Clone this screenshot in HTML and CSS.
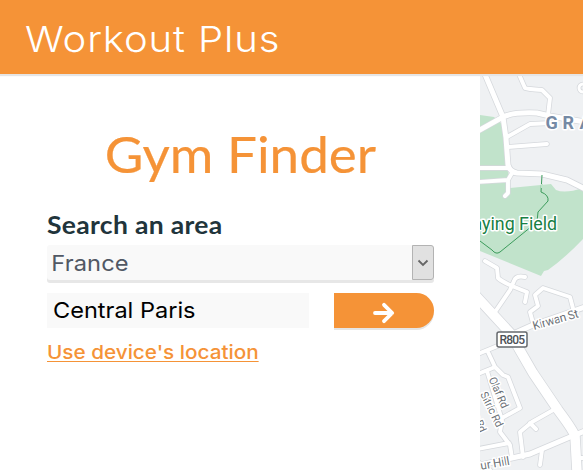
FILE: index.html
```html
<!DOCTYPE html>
<html lang="en">
<head>
<meta charset="utf-8">
<title>Workout Plus</title>
<link rel="stylesheet" href="styles.css">
</head>
<body>
<header class="bar"><span class="brand">Workout Plus</span></header>
<div class="content">
  <main class="panel">
    <h1 class="title">Gym Finder</h1>
    <h2 class="label">Search an area</h2>
    <div class="select">
      <span class="country">France</span>
      <span class="drop"><svg width="12" height="8" viewBox="0 0 12 8"><path d="M1.500 1.500 6 6l4.500-4.500" fill="none" stroke="#666" stroke-width="1.800"/></svg></span>
    </div>
    <form class="row">
      <div class="field"><span class="city">Central Paris</span></div>
      <button class="go" type="button" aria-label="Search"><svg width="22" height="22" viewBox="0 0 22 22"><path d="M2 11H19M11 2.800 19.200 11 11 19.200" fill="none" stroke="#fff" stroke-width="3.800" stroke-linecap="round" stroke-linejoin="round"/></svg></button>
    </form>
    <a class="link"><span>Use device's location</span></a>
  </main>
  <svg class="map" width="103" height="396" viewBox="480 74 103 396">
    <defs>
      <g id="roads" fill="none" stroke-linejoin="round" stroke-linecap="round">
        <path d="M518 72 525 88Q527 89 542 90L550 98 548 115M507 137 530 124 552 123M507 147 547 144M478 168H508M478 182 508 180 512 173M508 180V193L505 196"/>
        <path d="M485 261 497 268 498 278Q503 283 527 292L525 302M525 277Q516 275 514 281L510 290 495 312M574 312 570 297 543 288 535 295 538 306 530 312 533 323"/>
        <path d="M478 354 512 340M488 352 495 367 503 375 508 377 520 408 502 418M478 374 495 367M487 371 502 420 500 432 510 445 512 458M478 449 509 443M555 409 532 422 520 432 523 457M530 423 536 429M542 450 540 465M577 458H585M478 462 490 470"/>
      </g>
      <g id="streets" fill="none" stroke-linejoin="round" stroke-linecap="round">
        <path d="M484 72 503 117 506 138 508 165Q510 172 517 173L542 174 567 180 585 189M478 131 503 117Q513 112 537 113L550 116 585 122M513 334 533 325 585 307M476 466 512 458 530 454 570 437 585 431"/>
      </g>
      <path id="highway" d="M476 296 512 335 518 347 533 373 558 410Q573 430 575 436L577 472" fill="none"/>
    </defs>
    <rect x="480" y="74" width="103" height="396" fill="#eff1f3"/>
    <path d="M480 115 494 117 502 124 507 160 510 188 551 184 556 190Q565 194 583 188V239Q565 258 548 270L544 271 541 276 480 251Z" fill="#c1e3cb"/>
    <use href="#roads" stroke="#d5d8dc" stroke-width="5.400"/>
    <use href="#streets" stroke="#d5d8dc" stroke-width="6.500"/>
    <use href="#highway" stroke="#d5d8dc" stroke-width="11"/>
    <circle cx="583" cy="88" r="4" fill="#eff1f3" stroke="#d5d8dc" stroke-width="4.500"/>
    <use href="#roads" stroke="#fff" stroke-width="3.900"/>
    <use href="#streets" stroke="#fff" stroke-width="5"/>
    <use href="#highway" stroke="#fff" stroke-width="9.500"/>
    <circle cx="583" cy="88" r="4" fill="none" stroke="#fff" stroke-width="3"/>
    <path d="M542 175 541 192Q549 195 548 201L538 212 537 222 500 252Q496 255 492 250L480 241" fill="none" stroke="#3b9b5b" stroke-width="1"/>
    <path d="M542 184V188" stroke="#c1e3cb" stroke-width="2"/>
    <g class="names">
      <text x="545.500 562.500 579.500" y="129" class="area">GRA</text>
      <text x="557" y="230" class="park" text-anchor="end">Playing Field</text>
      <text transform="translate(534 330) rotate(-16)" class="road" textLength="47">Kirwan St</text>
      <text transform="translate(466 402) rotate(66)" class="road small" textLength="34">Ross Rd</text>
      <text transform="translate(488.500 379) rotate(66)" class="road small" textLength="33">Olaf Rd</text>
      <text transform="translate(480 394) rotate(64)" class="road small" textLength="38">Sitric Rd</text>
      <text transform="translate(457 474) rotate(-10)" class="road" textLength="54">Arbour Hill</text>
    </g>
    <rect x="497" y="332" width="30" height="15" rx="2" fill="#fff" stroke="#66696d" stroke-width="1.500"/>
    <text x="499.500" y="344" class="shield" textLength="25.500">R805</text>
  </svg>
</div>
</body>
</html>
```

FILE: styles.css
```css
* { box-sizing: border-box; }
body { margin: 0; height: 470px; overflow: hidden; background: #fff; font-family: Inter, "Open Sans", sans-serif; }
.bar { position: relative; height: 74px; padding: 14px 0 0 25px; background: #f59337; box-shadow: 0 2px 1px #e5e5e5; }
.brand { display: inline-block; font-size: 36px; line-height: 50px; font-weight: 300; letter-spacing: .8px; color: #fff; white-space: nowrap; transform: scaleX(1.112); transform-origin: left; }
.content { display: flex; height: 396px; }
.panel { width: 480px; padding: 50px 46px 0 47px; }
.title { margin: 0; font-family: Lato, sans-serif; font-size: 50px; line-height: 60px; font-weight: 400; text-align: center; color: #f59337; white-space: nowrap; transform: scaleX(1.06); -webkit-text-stroke: .2px #f59337; }
.label { margin: 24px 0 0; font-family: Lato, sans-serif; font-size: 25px; line-height: 32px; font-weight: 700; letter-spacing: .3px; color: #21343b; white-space: nowrap; transform: scaleX(1.06); transform-origin: left; }
.select { display: flex; justify-content: space-between; height: 35px; margin-top: 5px; border-radius: 3px; background: #f9f9f9; box-shadow: 0 3px 0 #e7e7e7; }
.country { padding-left: 4px; font-size: 22px; line-height: 36px; font-weight: 400; letter-spacing: .1px; color: #515864; transform: scaleX(1.075); transform-origin: left; }
.drop { display: flex; align-items: center; justify-content: center; width: 22px; border: 1px solid #b3b3b3; border-radius: 0 3px 3px 0; background: #e1e1e1; }
.row { display: flex; justify-content: space-between; margin: 13px 0 0; }
.field { width: 262px; height: 35px; padding-left: 6px; background: #f9f9f9; }
.city { display: inline-block; font-size: 22px; line-height: 35px; color: #000; transform: scaleX(1.07); transform-origin: left; }
.go { width: 100px; height: 35px; padding: 8px 0 0; border: 0; border-radius: 0 18px 18px 0; background: #f59337; box-shadow: 0 2px 0 #e5e5e5; }
.link { display: block; margin-top: 11px; font-size: 19px; line-height: 27px; font-weight: 450; color: #f59337; white-space: nowrap; }
.link span { display: inline-block; text-decoration: underline; text-underline-offset: 2px; text-decoration-thickness: 1px; text-decoration-skip-ink: none; transform: scaleX(1.09); transform-origin: left; }
.map { display: block; flex: none; font-family: Roboto, sans-serif; }
.names text { paint-order: stroke; stroke: #fff; stroke-width: 3px; stroke-linejoin: round; }
.area { font-size: 18px; font-weight: 700; fill: #758aa5; }
.park { font-size: 17.800px; font-weight: 400; fill: #188044; }
.road { font-size: 12px; font-weight: 400; fill: #6c7177; }
.small { font-size: 11px; }
.shield { font-size: 12px; font-weight: 500; fill: #4d5156; }
```
